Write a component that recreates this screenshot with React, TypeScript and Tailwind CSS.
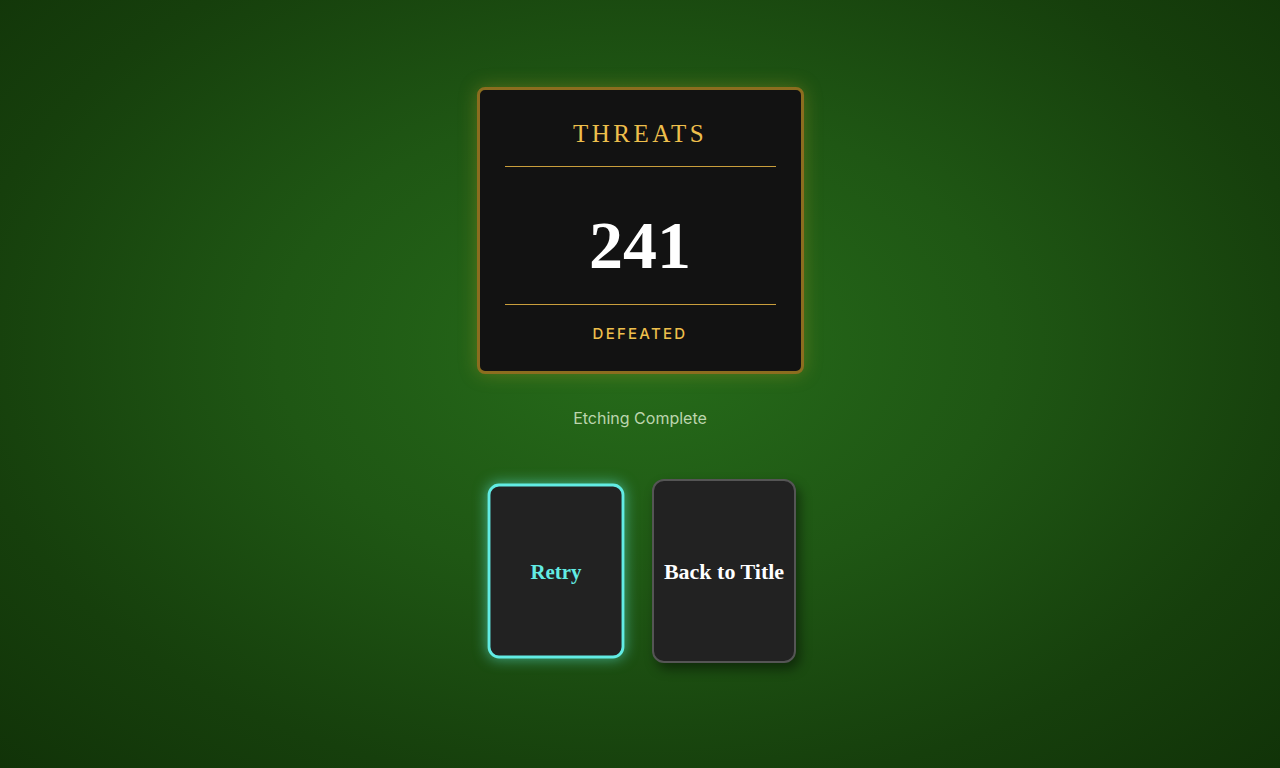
const serif = "font-['Liberation_Serif','DejaVu_Serif',serif]";
const sans = "font-['Inter','Noto_Sans',sans-serif]";

function ActionCard({
  label,
  active,
}: {
  label: string;
  active?: boolean;
}) {
  return (
    <button
      className={
        active
          ? `flex h-[184px] w-[144px] scale-95 items-center justify-center rounded-xl border-[3px] border-[#62ece4] bg-[#222222] shadow-[0_0_14px_rgba(98,236,228,0.55)] ${serif} text-[22px] font-bold text-[#62ece4]`
          : `flex h-[184px] w-[144px] items-center justify-center rounded-xl border-2 border-[#555555] bg-[#222222] shadow-[4px_6px_12px_rgba(0,0,0,0.45)] ${serif} text-[22px] font-bold text-white`
      }
    >
      {label}
    </button>
  );
}

export default function App() {
  return (
    <main className="flex h-[768px] w-full flex-col items-center overflow-hidden bg-[radial-gradient(ellipse_at_50%_45%,#266c1a_0%,#1f5714_40%,#163f0c_75%,#113308_100%)] pt-[87px]">
      <section className="flex w-[327px] flex-col items-stretch rounded-lg border-[3px] border-[#8c6d1f] bg-[#121212] px-[25px] pb-[27px] pt-[28px] shadow-[0_0_18px_rgba(190,160,40,0.35)]">
        <h1 className={`text-center text-[25px] font-medium leading-8 tracking-[0.14em] text-[#eebf4c] ${serif}`}>
          THREATS
        </h1>
        <div className="mt-[16px] h-px bg-[#c99e3c]" />
        <div className={`flex h-[137px] items-center justify-center pt-[18px] text-[68px] font-bold leading-none text-white ${serif}`}>
          241
        </div>
        <div className="h-px bg-[#c99e3c]" />
        <p className={`mt-[19px] text-center text-[15px] font-medium leading-5 tracking-[0.15em] text-[#eebf4c] ${sans}`}>
          DEFEATED
        </p>
      </section>

      <p className={`mt-[34px] text-base leading-5 text-[#bcd5ae] ${sans}`}>
        Etching Complete
      </p>

      <div className="mt-[51px] flex gap-6">
        <ActionCard label="Retry" active />
        <ActionCard label="Back to Title" />
      </div>
    </main>
  );
}
